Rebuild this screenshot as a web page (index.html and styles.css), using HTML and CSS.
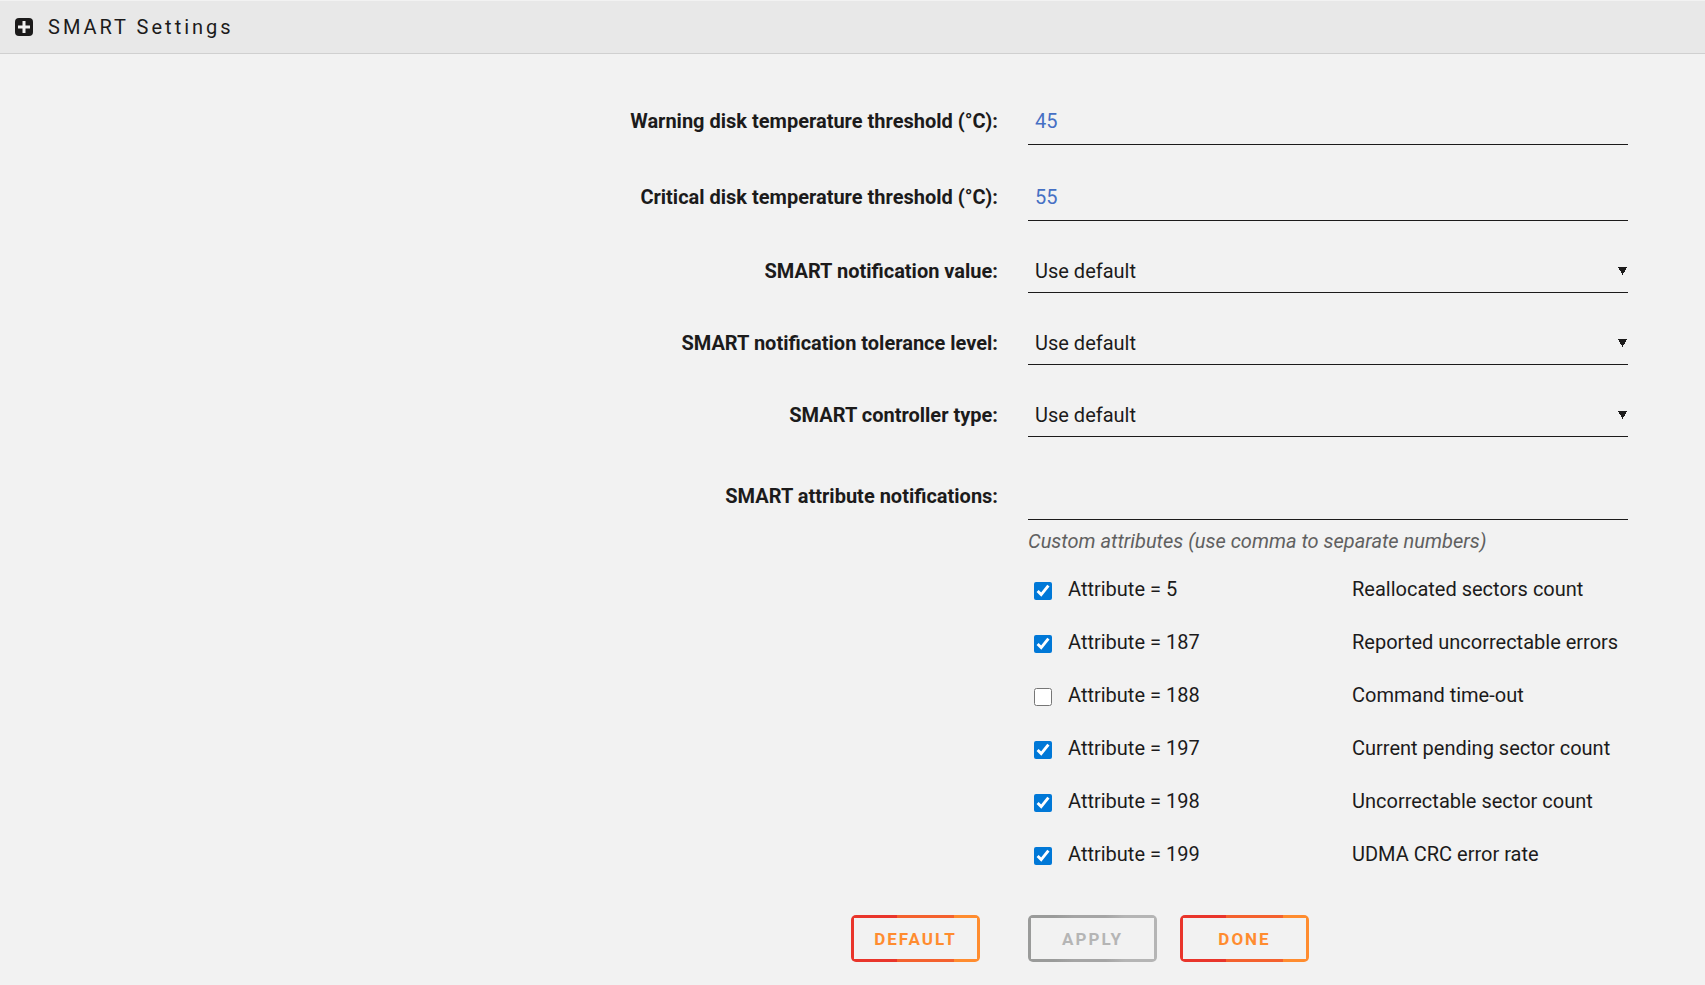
FILE: index.html
```
<!DOCTYPE html>
<html lang="en">
<head>
<meta charset="utf-8">
<title>SMART Settings</title>
<link rel="stylesheet" href="styles.css">
</head>
<body>
<header class="title-bar">
  <svg class="title-icon" viewBox="0 0 18 18" aria-hidden="true">
    <rect width="18" height="18" rx="4" fill="#1c1b1b"/>
    <path d="M9 3v12M3 9h12" stroke="#f2f2f2" stroke-width="3"/>
  </svg>
  <h1 class="title">SMART Settings</h1>
</header>
<form class="settings">
  <div class="row row-text">
    <label class="label" for="warning">Warning disk temperature threshold (°C):</label>
    <input class="field number" id="warning" type="text" value="45">
  </div>
  <div class="row row-text">
    <label class="label" for="critical">Critical disk temperature threshold (°C):</label>
    <input class="field number" id="critical" type="text" value="55">
  </div>
  <div class="row row-select">
    <label class="label" for="value">SMART notification value:</label>
    <select class="field select" id="value"><option>Use default</option></select>
  </div>
  <div class="row row-select">
    <label class="label" for="level">SMART notification tolerance level:</label>
    <select class="field select" id="level"><option>Use default</option></select>
  </div>
  <div class="row row-select">
    <label class="label" for="type">SMART controller type:</label>
    <select class="field select" id="type"><option>Use default</option></select>
  </div>
  <div class="row row-custom">
    <label class="label" for="custom">SMART attribute notifications:</label>
    <input class="field" id="custom" type="text" aria-describedby="custom-hint">
  </div>
  <div class="row">
    <div class="details">
      <p class="hint" id="custom-hint">Custom attributes (use comma to separate numbers)</p>
      <label class="attribute"><input class="check" type="checkbox" checked><span class="name">Attribute = 5</span><span>Reallocated sectors count</span></label>
      <label class="attribute"><input class="check" type="checkbox" checked><span class="name">Attribute = 187</span><span>Reported uncorrectable errors</span></label>
      <label class="attribute"><input class="check" type="checkbox"><span class="name">Attribute = 188</span><span>Command time-out</span></label>
      <label class="attribute"><input class="check" type="checkbox" checked><span class="name">Attribute = 197</span><span>Current pending sector count</span></label>
      <label class="attribute"><input class="check" type="checkbox" checked><span class="name">Attribute = 198</span><span>Uncorrectable sector count</span></label>
      <label class="attribute"><input class="check" type="checkbox" checked><span class="name">Attribute = 199</span><span>UDMA CRC error rate</span></label>
    </div>
  </div>
  <div class="row row-buttons">
    <div class="default-cell"><button class="button" type="button">Default</button></div>
    <div class="actions">
      <button class="button" type="submit" disabled>Apply</button>
      <button class="button" type="button">Done</button>
    </div>
  </div>
</form>
</body>
</html>
```
FILE: styles.css
```
* { box-sizing: border-box; }

body {
  margin: 0;
  background: #f2f2f2;
  color: #1c1b1b;
  font: 20px/24px Roboto, "Liberation Sans", sans-serif;
}

.title-bar {
  display: flex;
  align-items: center;
  gap: 15px;
  height: 54px;
  padding: 0 15px;
  background: #e8e8e8;
  border-top: 1px solid #f2f2f2;
  border-bottom: 1px solid #d0d0d0;
}
.title-icon { width: 18px; height: 18px; }
.title { margin: 0; font-size: 20px; font-weight: 400; letter-spacing: 3px; }

.settings { padding: 43px 77px 20px 20px; }

.row {
  display: grid;
  grid-template-columns: minmax(0, 1fr) 600px;
  column-gap: 30px;
  align-items: center;
}
.row-text { margin-bottom: 28px; }
.row-select { margin-bottom: 28px; }
.row-custom { margin-top: 35px; }

.label { text-align: right; font-weight: 700; }

.field {
  width: 100%;
  height: 48px;
  margin: 0;
  padding: 0 7px;
  border: 0;
  border-bottom: 1px solid #1c1b1b;
  border-radius: 0;
  outline: 0;
  background: transparent;
  color: #1c1b1b;
  font: inherit;
}
.number { color: #4670c4; }
.select {
  appearance: none;
  height: 44px;
  background-image:
    linear-gradient(to top right, transparent 50%, #1c1b1b 50%),
    linear-gradient(to bottom right, #1c1b1b 50%, transparent 50%);
  background-size: 5px 9px;
  background-repeat: no-repeat;
  background-position: right 5px top 18px, right 1px top 18px;
}

.details { grid-column: 2; }
.hint { margin: 8px 0; color: #606060; font-style: italic; line-height: 26px; }
.attribute {
  display: grid;
  grid-template-columns: 18px 268px 1fr;
  column-gap: 16px;
  align-items: center;
  height: 53px;
  padding-left: 6px;
}
.check { width: 18px; height: 18px; margin: 4px 0 0; accent-color: #0078d7; }

.row-buttons { margin-top: 35px; }
.default-cell { display: flex; justify-content: flex-end; padding-right: 18px; }
.actions { display: flex; gap: 23px; }
.button {
  width: 129px;
  height: 47px;
  padding: 0;
  border: 0;
  border-radius: 5px;
  background:
    linear-gradient(#f2f2f2, #f2f2f2) 3px 3px / calc(100% - 6px) calc(100% - 6px) no-repeat,
    linear-gradient(90deg, #e9352b 36%, #f4612e 36% 80%, #ff8c2f 80%);
  color: #ff8c2f;
  font: 700 17px/20px Roboto, "Liberation Sans", sans-serif;
  letter-spacing: 2px;
  text-transform: uppercase;
}
.button:disabled {
  background:
    linear-gradient(#f2f2f2, #f2f2f2) 3px 3px / calc(100% - 6px) calc(100% - 6px) no-repeat,
    linear-gradient(90deg, #9a9b9a 20%, #a5a5a5 36% 60%, #b5b5b5 75%);
  color: #b5b5b5;
}
```
